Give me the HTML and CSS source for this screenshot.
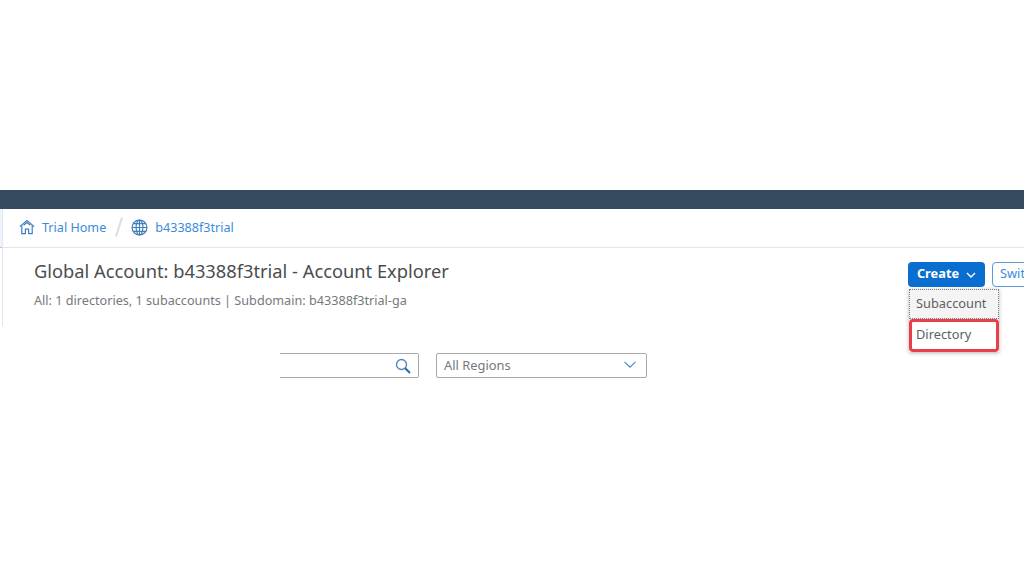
FILE: index.html
```html
<!DOCTYPE html>
<html>
<head>
    <meta charset="utf-8">
    <title>Account Explorer</title>
    <link rel="stylesheet" href="styles.css">
</head>
<body>
<div class="shellbar"></div>
<div class="page">
    <div class="sidebar">
        <div class="sidebar-item"></div>
    </div>
    <div class="content">
        <nav class="breadcrumb">
            <svg class="crumb-icon" viewBox="0 0 16 16" width="16" height="16" fill="none" stroke="#3f7fbd" stroke-width="1.2">
                <path d="M.8 7.6 8 1.6l7.2 6"/>
                <path d="M2.8 6.4v8.2h3.6v-4.4h3.2v4.4h3.6V6.4"/>
                <path d="M4.6 6.2 8 3.6l3.4 2.6"/>
            </svg>
            <a class="crumb-link">Trial Home</a>
            <span class="crumb-sep"></span>
            <svg class="crumb-icon" viewBox="0 0 16 16" width="17" height="17" fill="none" stroke="#3f7fbd" stroke-width="1.1">
                <circle cx="8" cy="8" r="7"/>
                <ellipse cx="8" cy="8" rx="3.2" ry="7"/>
                <path d="M8 1v14M1 8h14M2 4.4h12M2 11.6h12"/>
            </svg>
            <a class="crumb-link">b43388f3trial</a>
        </nav>
        <header class="page-header">
            <div class="titles">
                <h1>Global Account: b43388f3trial - Account Explorer</h1>
                <p>All: 1 directories, 1 subaccounts | Subdomain: b43388f3trial-ga</p>
            </div>
            <div class="actions">
                <button class="btn-create"><span class="btn-label">Create</span>
                    <svg viewBox="0 0 10 6" width="10" height="6" fill="none" stroke="#fff" stroke-width="1.4"><path d="M1 1l4 4 4-4"/></svg>
                </button>
                <button class="btn-switch"><span class="btn-label">Switch</span></button>
                <div class="menu">
                    <div class="menu-item is-focused">Subaccount</div>
                    <div class="menu-item is-marked">Directory</div>
                </div>
            </div>
        </header>
        <div class="filters">
            <div class="search">
                <svg viewBox="0 0 16 16" width="16" height="16" fill="none">
                    <circle cx="6.5" cy="6.5" r="5" stroke="#4f86bd" stroke-width="1.3"/>
                    <path d="M10.2 10.2 15 15" stroke="#2a6aa8" stroke-width="2"/>
                </svg>
            </div>
            <div class="select">
                <span>All Regions</span>
                <svg viewBox="0 0 12 7" width="12" height="7" fill="none" stroke="#4f86bd" stroke-width="1.1"><path d="M.5.8 6 6.2 11.5.8"/></svg>
            </div>
        </div>
    </div>
</div>
</body>
</html>
```

FILE: styles.css
```css
html, body {
    margin: 0;
    height: 100%;
    overflow: hidden;
    background: #fff;
}

body {
    padding-top: 190px;
    box-sizing: border-box;
    font-family: "Noto Sans", "Liberation Sans", sans-serif;
    color: #32363a;
}

.shellbar {
    height: 19px;
    background: #354a5f;
}

.page {
    display: flex;
}

.sidebar {
    width: 2px;
    height: 117px;
    background: #fff;
    border-right: 1px solid #e4e8ec;
}

.sidebar-item {
    height: 38px;
    background: #edf4fb;
    border-bottom: 1px solid #a9c9ea;
}

.content {
    flex: 1;
    min-width: 0;
}

.breadcrumb {
    display: flex;
    align-items: center;
    height: 36px;
    padding: 0 0 2px 16px;
    border-bottom: 1px solid #e5e5e5;
}

.crumb-link {
    font-size: 12.6px;
    color: #3a8bdb;
}

.crumb-icon {
    margin-right: 7px;
}

.crumb-sep {
    width: 2px;
    height: 20px;
    margin: 0 11px 0 12px;
    background: #dcdcdc;
    transform: rotate(18deg);
}

.page-header {
    display: flex;
    justify-content: space-between;
    padding: 11px 0 0 31px;
    height: 92px;
    box-sizing: border-box;
}

.titles h1 {
    margin: 0;
    font-size: 18.3px;
    font-weight: 400;
    line-height: 24px;
    color: #4a4d50;
}

.titles p {
    margin: 8px 0 0;
    font-size: 12.65px;
    line-height: 18px;
    color: #75797d;
}

.actions {
    position: relative;
    display: flex;
    gap: 7px;
    width: 116px;
    margin-top: 3px;
    align-items: flex-start;
    flex-shrink: 0;
    align-self: flex-start;
}

.btn-create,
.btn-switch {
    height: 25px;
    padding: 0;
    border-radius: 4px;
    font-family: inherit;
    font-size: 12.8px;
    flex-shrink: 0;
}

.btn-label {
    display: block;
    padding-bottom: 3px;
}

.btn-create {
    display: flex;
    align-items: center;
    justify-content: center;
    gap: 7px;
    width: 77px;
    border: 0;
    background: #0a6ed1;
    color: #fff;
    font-weight: 700;
}

.btn-switch {
    width: 60px;
    padding-left: 7px;
    border: 1px solid #5c9bd8;
    background: #fff;
    color: #3a8bdb;
    text-align: left;
}

.menu {
    position: absolute;
    top: 27px;
    left: 1px;
    width: 90px;
    background: #fff;
    box-shadow: 0 1px 4px rgba(0, 0, 0, .3);
    font-size: 12.8px;
    color: #5c6064;
}

.menu-item {
    display: flex;
    align-items: center;
    box-sizing: border-box;
    padding-bottom: 3px;
}

.menu-item.is-focused {
    height: 30px;
    background: #f4f4f4;
    border: 1px dotted #77797b;
    padding-left: 6px;
}

.menu-item.is-marked {
    height: 33px;
    border: 3px solid #e8404a;
    border-radius: 4px;
    padding-left: 4px;
}

.filters {
    display: flex;
    gap: 17px;
    padding-left: 277px;
    margin-top: 13px;
}

.search,
.select {
    display: flex;
    align-items: center;
    height: 25px;
    box-sizing: border-box;
    border: 1px solid #a6aaae;
    background: #fff;
}

.search {
    justify-content: flex-end;
    width: 139px;
    padding-right: 7px;
    border-left: 0;
    border-radius: 0 2px 2px 0;
}

.select {
    justify-content: space-between;
    width: 211px;
    padding: 0 10px 2px 7px;
    border-radius: 2px;
    font-size: 12.9px;
    color: #75797d;
}
```
